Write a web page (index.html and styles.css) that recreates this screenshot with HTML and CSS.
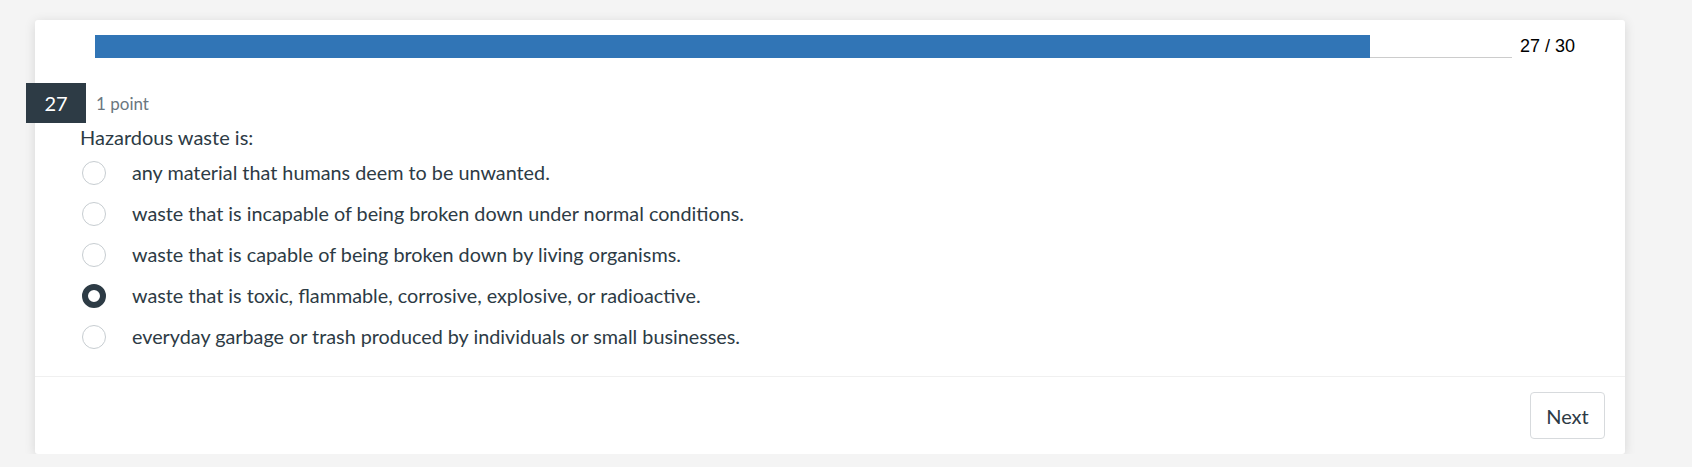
FILE: index.html
```html
<!DOCTYPE html>
<html lang="en">
<head>
<meta charset="utf-8">
<title>Quiz question 27</title>
<link rel="stylesheet" href="styles.css">
</head>
<body>
<div class="card">
  <div class="progress-row">
    <div class="track"><div class="fill" style="width: 90%"></div></div>
    <div class="count">27 / 30</div>
  </div>
  <div class="q-head">
    <div class="badge">27</div>
    <div class="points">1 point</div>
  </div>
  <div class="q-body">
    <div class="q-text">Hazardous waste is:</div>
    <ul class="options">
      <li class="option"><span class="radio"></span><span class="label">any material that humans deem to be unwanted.</span></li>
      <li class="option"><span class="radio"></span><span class="label">waste that is incapable of being broken down under normal conditions.</span></li>
      <li class="option"><span class="radio"></span><span class="label">waste that is capable of being broken down by living organisms.</span></li>
      <li class="option"><span class="radio checked"></span><span class="label">waste that is toxic, flammable, corrosive, explosive, or radioactive.</span></li>
      <li class="option"><span class="radio"></span><span class="label">everyday garbage or trash produced by individuals or small businesses.</span></li>
    </ul>
  </div>
  <div class="footer">
    <button class="next">Next</button>
  </div>
</div>
</body>
</html>
```

FILE: styles.css
```css
* { box-sizing: border-box; }
html, body { margin: 0; padding: 0; }
body {
  background: #f4f4f4;
  font-family: Lato, "Open Sans", sans-serif;
  color: #2d3b45;
}
.card {
  margin: 20px 0 0 35px;
  width: 1590px;
  height: 434px;
  background: #fff;
  border-radius: 3px;
  box-shadow: 0 2px 12px rgba(0, 0, 0, 0.12);
  display: flex;
  flex-direction: column;
}
.progress-row {
  display: flex;
  align-items: center;
  padding: 15px 0 0 60px;
  height: 38px;
}
.track {
  width: 1417px;
  height: 23px;
  border-bottom: 1px solid #cccccc;
  display: flex;
}
.fill {
  height: 23px;
  background: #3175b6;
}
.count {
  margin-left: 8px;
  font-family: "Liberation Sans", Arial, sans-serif;
  font-size: 18px;
  color: #000;
  line-height: 23px;
}
.q-head {
  display: flex;
  align-items: center;
  margin: 25px 0 0 -9px;
}
.badge {
  width: 60px;
  height: 40px;
  background: #2d3b45;
  color: #fff;
  font-size: 20px;
  display: flex;
  align-items: center;
  justify-content: center;
}
.points {
  margin-left: 10px;
  font-size: 17px;
  color: #6b7780;
}
.q-body {
  padding-left: 45px;
}
.q-text {
  font-size: 20px;
  line-height: 24px;
  margin-top: 2px;
}
.options {
  list-style: none;
  margin: 3px 0 0 0;
  padding: 0;
}
.option {
  display: flex;
  align-items: center;
  height: 41px;
  font-size: 19.8px;
}
.radio {
  width: 24px;
  height: 24px;
  border-radius: 50%;
  border: 1px solid #c7cdd1;
  margin-left: 2px;
  flex-shrink: 0;
  background: #fff;
}
.radio.checked {
  border: 6px solid #2d3b45;
}
.label {
  margin-left: 26px;
  padding-bottom: 2px;
}
.footer {
  margin-top: 19px;
  border-top: 1px solid #f0f0f0;
  flex: 1;
  display: flex;
  justify-content: flex-end;
  align-items: flex-start;
  padding: 15px 20px 0 0;
}
.next {
  width: 75px;
  height: 47px;
  border: 1px solid #d7dadd;
  border-radius: 4px;
  background: #fff;
  font-family: Lato, "Open Sans", sans-serif;
  font-size: 20px;
  color: #2d3b45;
  padding: 0;
}
```
